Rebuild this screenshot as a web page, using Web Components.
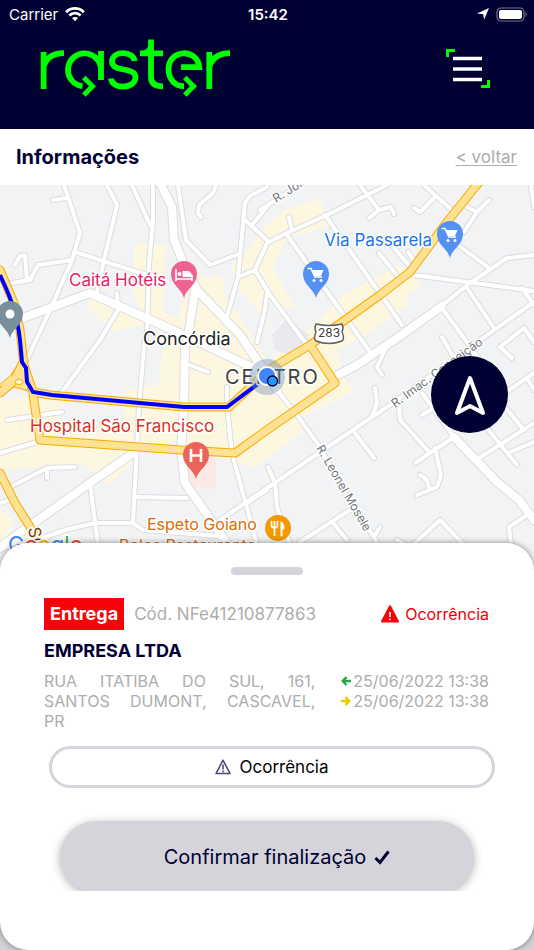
<!DOCTYPE html>
<html lang="pt-BR">
<head>
<meta charset="utf-8">
<meta name="viewport" content="width=device-width, initial-scale=1">
<title>Raster - Informações</title>
<style>
  html { height: 100%; }
  body { margin: 0; min-height: 100%; display: grid; background: #d2d1d7; font-family: Inter, "Liberation Sans", sans-serif; color: #000033; }
</style>
</head>
<body>
<raster-app></raster-app>

<template id="tpl-app">
  <style>
    :host { display: flex; flex-direction: column; min-width: 0; }
    city-map { flex: 1; min-height: 240px; margin-bottom: -34px; }
  </style>
  <status-bar></status-bar>
  <app-header></app-header>
  <page-title>Informações</page-title>
  <city-map></city-map>
  <delivery-sheet></delivery-sheet>
</template>

<template id="tpl-status">
  <style>
    :host { display: grid; grid-template-columns: 1fr auto 1fr; align-items: center; height: 28px; padding: 0 7px 0 9px; background: #000033; color: #fff; font-size: 15px; }
    .left, .right { display: flex; align-items: center; gap: 7px; }
    .right { justify-content: flex-end; }
    time { font-weight: 600; }
    svg { display: block; }
  </style>
  <span class="left">Carrier
    <svg width="20" height="16" viewBox="0 0 20 16" fill="none" stroke="#fff" stroke-width="2.8"><path d="M1.2 6.2C6 1.2 14 1.2 18.8 6.2"/><path d="M4.3 9.6c3.2-3.2 8.2-3.2 11.4 0"/><path d="M10 15.2 7 12.1c1.7-1.6 4.3-1.6 6 0z" fill="#fff" stroke="none"/></svg>
  </span>
  <time>15:42</time>
  <span class="right">
    <svg width="12" height="12" viewBox="0 0 12 12"><path d="M12 0 7.2 11.6 6.2 6.2 0 5.4z" fill="#fff"/></svg>
    <svg width="31" height="15" viewBox="0 0 31 15"><rect x="1" y="1" width="27" height="13" rx="4" fill="none" stroke="#77778f" stroke-width="1.2"/><rect x="3" y="3" width="23" height="9" rx="2" fill="#fff"/><path d="M29.600 5c1.500.8 1.500 4.200 0 5z" fill="#77778f"/></svg>
  </span>
</template>

<template id="tpl-header">
  <style>
    :host { display: flex; justify-content: space-between; align-items: flex-start; box-sizing: border-box; height: 101px; padding: 10px 44px 0 40px; background: #000033; }
    button { margin: 10px 0 0; padding: 0; border: 0; background: none; cursor: pointer; }
    svg { display: block; }
  </style>
  <svg width="192" height="60" viewBox="40 38 192 60" role="img" aria-label="raster" fill="none" stroke="#00ff00" stroke-width="5.8">
    <path d="M43.600 52v37M43.600 67C46 58 52 53.300 64 53.200"/>
    <path d="M101 51v29M101 69.800A16.500 16.500 0 1 0 82.500 86.200"/>
    <path d="M83.800 77.500 92.500 86.200 83.800 95" stroke-width="5"/>
    <path d="M134.500 61C134 51 112.500 50 112 61.500C112 73 135.500 66 135.500 77.500C135 89.500 112 89.500 111 78.500"/>
    <path d="M151 39.500V77q0 9.300 12 9.300M140 53.300h23"/>
    <path d="M141 51q7 0 7.500-8v8z" fill="#00ff00" stroke="none"/>
    <path d="M181 67.200h18.300C197.500 48 168.500 48.500 168.500 69.500C168.500 79 175 86.200 184 86.200"/>
    <path d="M184.800 77.500 193.500 86.200 184.800 95" stroke-width="5"/>
    <path d="M209.300 52v37M209.300 67C212 58 218 53.300 230 53.200"/>
  </svg>
  <button type="button" aria-label="Menu">
    <svg width="44" height="42" viewBox="0 0 44 42"><path d="M1.500 9V2.500H9M42.500 32v6.500H35" fill="none" stroke="#00ff00" stroke-width="3"/><path d="M7 10.500h29M7 21h29M7 31.500h29" stroke="#fff" stroke-width="3.500"/></svg>
  </button>
</template>

<template id="tpl-title">
  <style>
    :host { display: flex; align-items: center; justify-content: space-between; height: 56px; padding: 0 17px 0 16px; background: #fff; }
    h1 { margin: 0; font-size: 20px; line-height: 24px; font-weight: 700; }
    a { font-size: 17px; color: #adadad; text-underline-offset: 2px; }
  </style>
  <h1><slot></slot></h1>
  <a href="#voltar">&lt; voltar</a>
</template>

<template id="tpl-map">
  <style>
    :host { display: block; position: relative; overflow: hidden; background: #f1f3f4; }
    .map { position: absolute; inset: 0; width: 100%; height: 100%; display: block; }
    button { position: absolute; right: 26px; top: 171px; width: 77px; height: 77px; padding: 0; border: 0; border-radius: 50%; background: #000033; display: grid; place-items: center; cursor: pointer; }
    .case { stroke: #dadce0; }
    .fill { stroke: #fff; }
    .roads, .wide, .trunk { fill: none; stroke-linecap: round; stroke-linejoin: round; }
    text { paint-order: stroke; stroke: #fff; stroke-width: 3px; stroke-linejoin: round; font-family: Inter, sans-serif; font-size: 17px; }
    .street { font-size: 12px; fill: #70757a; }
  </style>
  <svg class="map" viewBox="0 185 534 392" preserveAspectRatio="xMidYMin slice" role="img" aria-label="Mapa de Concórdia">
    <defs>
      <g id="minor">
        <path d="M64 185 80 233 72 260 50 310 35 342 27 360M107 185 117 205 104 260 97 292M132 185 150 225M153 185V220L149 265 147 330 144 347 139 407 133 522M178 185 186 240 210 265 239 254M216 185 213 193 199 205 198 213 201 217M267 187 250 196 245 203 238 277 227 317M243 218 267 240M252 225 267 207M53 200 67 198M0 285 30 280 38 265 72 260M15 265 20 256 25 255 27 280M75 252 147 275M117 293 118 310 100 340 62 392M190 365 208 372M267 293 265 310 257 342"/>
        <path d="M260 210 300 185M267 243 287 233 327 215 387 185M238 277 255 270 267 243M255 270 270 295 307 345M360 185 379 210 369 218M379 210 391 207 394 214M287 235 370 352M289 217 292 230M325 215 402 325M379 253 399 278M392 245 410 267M408 252 416 263M424 185 454 212M414 208 420 212 435 197M467 207 477 212 489 200M477 212 464 232M454 242 489 268M440 307 470 283 507 258 534 255M414 275 474 283 534 291M467 288 494 328M442 308 480 360M442 337 454 358M522 288 534 305M524 328 500 347 512 358M524 328 534 342M531 185 534 207"/>
        <path d="M220 520 267 488 390 405 480 340 534 302M385 350 377 367 382 375M375 388 377 403 372 417M277 390 297 415 320 447 347 497 374 537 385 560M355 433 374 458M399 407 400 420 414 435 429 452M415 463 454 437M435 448 441 475 437 487 417 495M420 475 426 479 429 487M422 393 454 437M422 415 434 408M479 458 534 423M487 428 517 465M505 407 524 430M509 390 534 373M527 378 534 390M510 452 534 442M527 515 509 527 511 545M300 542 350 510M333 523 347 540M268 467 275 483 277 507 290 545M374 537 380 527M397 540 410 547"/>
        <path d="M413 545 440 520 464 545"/>
        <path d="M7 420 62 412M0 453 37 442M10 487 47 468 75 467M47 468V478M90 483 98 545M137 497 187 498M37 540 65 530 95 523 133 523 143 530 217 536M0 503 10 500M227 387 227 407 232 453 257 545M247 503 267 490M0 550 20 540"/>
      </g>
      <g id="major">
        <path d="M161 185 172 207 174 240 183 262 197 290 240 335 277 390M23 318 90 293 173 330 262 372M195 290 189 330 185 345 184 407 181 450 185 483 227 543M0 547 90 483 133 453M334 377 357 365 400 336 442 306M454 437 497 482 519 500 534 520"/>
      </g>
      <g id="highway">
        <path d="M480 181 447 222 410 272 380 295 310 345 270 369 229 407H184L50 395 33 392 24 365 20 330 14 303 0 270M310 345 335 383 267 430 235 453 181 450 40 440 33 395M0 473 15 503 32 530 42 550M0 393 14 381 24 360"/>
      </g>
      <path id="pin" d="M0 0C-2-9-13-13-13-24a13 13 0 0 1 26 0C13-13 2-9 0 0z"/>
      <g id="cart"><path d="M-8.500-6.500h3.500l4 8.500H6" fill="none" stroke="#fff" stroke-width="1.600"/><path d="M-4.500-5H7.500L5 1H-2z" fill="#fff"/><circle cx="-2" cy="5.500" r="1.500" fill="#fff"/><circle cx="5" cy="5.500" r="1.500" fill="#fff"/></g>
    </defs>
    <rect y="185" width="534" height="500" fill="#f1f3f4"/>
    <g fill="#fef7e0">
      <path d="M135 243 166 245 162 311 178 318 196 272 208 280 219 274 225 282 222 290 245 325 272 370 278 345 267 320 235 285 231 264 239 260 267 225 285 210 320 198 324 212 330 226 287 238 273 268 295 308 280 309 267 295 260 302 282 350 310 328 345 294 400 265 422 285 406 297 408 305 380 325 368 334 337 350 345 380 355 390 330 404 300 418 308 428 285 445 255 468 234 460 200 453 140 455 110 485 85 465 0 470V400L70 393 66 410 124 405 126 388 160 385 162 350 175 335 145 325 125 328 115 332 88 308 93 292 140 310 132 285z"/>
      <path d="M0 510 14 520 5 540 0 542z"/>
    </g>
    <path d="M70 400 124 400 123 425 75 420 55 425 60 410z" fill="#f1f3f4"/>
    <path d="M272 335 286 320 310 335 300 358 275 350z" fill="#e8eaed"/>
    <path d="M188 458 216 455 216 489 190 487z" fill="#fce8e6"/>
    <use href="#minor" class="roads case" stroke-width="6"/>
    <use href="#major" class="wide case" stroke-width="10"/>
    <use href="#minor" class="roads fill" stroke-width="4"/>
    <use href="#major" class="wide fill" stroke-width="8"/>
    <path d="M-2 386 10 376 20 362 32 392 14 387 0 396z" fill="#fde293" stroke="#f9ab00"/>
    <use href="#highway" class="trunk" stroke="#f9ab00" stroke-width="9"/>
    <use href="#highway" class="trunk" stroke="#fde293" stroke-width="7"/>
    <path d="M2 384 12 376 22 366 30 389 14 384 2 392z" fill="#fde293"/>
    <ellipse cx="19" cy="382" rx="4" ry="2.500" fill="#fef7e0" stroke="#f9ab00"/>
    <path d="M0 275 C12 300 17 315 20 340L22 362 26 368 27 382 33 392 52 395 184 407H227L267 377" fill="none" stroke="#0000ff" stroke-width="4"/>

    <path d="M316 324q13 3 26 0 2 4 0 8 3 7 0 9-13 5-26 0-3-2 0-9-2-4 0-8z" fill="#fff" stroke="#5f6368" stroke-width="1.500"/>
    <text x="329" y="337" text-anchor="middle" style="font-size:12px;stroke:none" fill="#3c4043">283</text>

    <text class="street" transform="translate(276 203) rotate(-32)">R. Jor</text>
    <text class="street" transform="translate(395 408) rotate(-36)">R. Imac. Conceição</text>
    <text class="street" transform="translate(316 448) rotate(60)">R. Leonel Mosele</text>
    <text transform="translate(28 528) rotate(80)" fill="#7a3e00">SC</text>

    <use href="#pin" x="10" y="338" fill="#78909c"/><circle cx="10" cy="314" r="4.500" fill="#fff"/>
    <use href="#pin" x="184" y="298" fill="#f06292"/>
    <path d="M176 269v12M192 275v6M176 279h16" fill="none" stroke="#fff" stroke-width="1.600"/><path d="M182.500 271h5.500q4 1 4 6h-9.500z" fill="#fff"/><circle cx="179.500" cy="274" r="2" fill="#fff"/>
    <use href="#pin" x="450" y="258" fill="#5491f5"/><use href="#cart" x="450" y="235"/>
    <use href="#pin" x="316" y="298" fill="#5491f5"/><use href="#cart" x="316" y="275"/>
    <use href="#pin" x="196" y="479" fill="#ea6459"/>
    <path d="M191 449v13M201 449v13M191 455.500h10" stroke="#fff" stroke-width="2.600"/>
    <circle cx="278" cy="528" r="13" fill="#f29900"/>
    <path d="M274.500 523v13M271.500 521v4q0 3 3 3t3-3v-4M274.500 521v5" fill="none" stroke="#fff" stroke-width="1.700"/><path d="M281 536v-14q3 1 3 7h-2v7z" fill="#fff" stroke="#fff"/>

    <text x="69" y="286" fill="#e91e63">Caitá Hotéis</text>
    <text x="432" y="246" text-anchor="end" fill="#1a73e8">Via Passarela</text>
    <text x="143" y="345" fill="#202124" style="font-size:18px">Concórdia</text>
    <text x="225" y="384" fill="#3c4043" style="font-size:20px;letter-spacing:2px">CENTRO</text>
    <text x="30" y="432" fill="#d93025">Hospital São Francisco</text>
    <text x="147" y="530" fill="#d56e0c" style="font-size:16px">Espeto Goiano</text>
    <text x="119" y="551" fill="#d56e0c" style="font-size:16px">Bolos Restaurante</text>
    <text x="8" y="552" style="font-size:22px"><tspan fill="#4285f4">G</tspan><tspan fill="#ea4335">o</tspan><tspan fill="#fbbc04">o</tspan><tspan fill="#4285f4">g</tspan><tspan fill="#34a853">l</tspan><tspan fill="#ea4335">e</tspan></text>

    <circle cx="267" cy="377" r="18" fill="#6f92ba" opacity=".4"/>
    <circle cx="267" cy="376" r="9" fill="#4285f4" stroke="#fff" stroke-width="2"/>
    <circle cx="272.500" cy="381" r="5" fill="#1e9bff" stroke="#000033" stroke-width="1.300"/>
  </svg>
  <button type="button" aria-label="Navegar"><svg width="34" height="44" viewBox="0 0 34 44"><path d="M17 5 30 40 17 33 4 40z" fill="none" stroke="#fff" stroke-width="4" stroke-linejoin="round"/></svg></button>
</template>

<template id="tpl-sheet">
  <style>
    :host { display: flex; flex-direction: column; position: relative; box-sizing: border-box; padding: 24px 39px 59px; border-radius: 28px; background: #fff; box-shadow: 0 0 6px rgba(0,0,0,.45); }
    .handle { width: 72px; height: 8px; border-radius: 4px; background: #d5d4da; align-self: center; }
    section { padding: 23px 6px 0 5px; }
    .top { display: flex; align-items: center; height: 32px; gap: 10px; font-size: 17px; }
    .tag { background: #f60409; color: #fff; font-weight: 700; font-size: 18px; line-height: 32px; padding: 0 6px; }
    .code { color: #adadad; }
    .alert { margin-left: auto; display: flex; align-items: center; gap: 6px; color: #f00000; font-size: 16px; }
    h2 { margin: 11px 0 10px; font-size: 18px; line-height: 20px; font-weight: 700; }
    .info { display: flex; justify-content: space-between; gap: 26px; color: #adadad; font-size: 16px; line-height: 20px; }
    address { flex: 1; font-style: normal; }
    address span { display: block; text-align: justify; text-align-last: justify; }
    address span:last-child { text-align-last: start; }
    .dates { display: flex; flex-direction: column; }
    .dates span { display: flex; align-items: center; gap: 1px; white-space: nowrap; }
    .wide { margin: 15px 0 0 10px; }
    .confirm { box-sizing: border-box; overflow: hidden; margin: 20px 0 0; padding: 13px 21px 0; height: 83px; }
    svg { display: block; }
  </style>
  <div class="handle"></div>
  <section>
    <div class="top">
      <span class="tag">Entrega</span>
      <span class="code">Cód. NFe41210877863</span>
      <span class="alert"><svg width="18" height="18" viewBox="0 0 18 18"><path d="M9 1.200 17 16.500H1z" fill="#f60409" stroke="#f60409" stroke-width="2" stroke-linejoin="round"/><path d="M9 7v5M9 13.500v1.800" stroke="#fff" stroke-width="1.500"/></svg>Ocorrência</span>
    </div>
    <h2>EMPRESA LTDA</h2>
    <div class="info">
      <address><span>RUA ITATIBA DO SUL, 161,</span> <span>SANTOS DUMONT, CASCAVEL,</span> <span>PR</span></address>
      <div class="dates">
        <span><svg width="11" height="10" viewBox="0 0 11 10" fill="none" stroke="#28a745" stroke-width="2.500"><path d="M5.500 1 1.800 5l3.700 4M2 5H10"/></svg>25/06/2022 13:38</span>
        <span><svg width="11" height="10" viewBox="0 0 11 10" fill="none" stroke="#eccc00" stroke-width="2.500"><path d="M4.500 1 8.200 5l-3.700 4M8 5H0"/></svg>25/06/2022 13:38</span>
      </div>
    </div>
  </section>
  <pill-button class="wide">
    <svg slot="icon" width="16" height="16" viewBox="0 0 16 16" fill="none" stroke="#4a4a78" stroke-width="1.600" stroke-linejoin="round"><path d="M8 1.200 15 14.500H1zM8 5.500v5M8 11.500v1.800"/></svg>
    Ocorrência
  </pill-button>
  <div class="confirm">
    <pill-button solid>Confirmar finalização
      <svg slot="end" width="16" height="15" viewBox="0 0 16 15" fill="none" stroke="#000033" stroke-width="3"><path d="M1.500 8 6 12.500 14.500 1.500"/></svg>
    </pill-button>
  </div>
</template>

<template id="tpl-pill">
  <style>
    :host { display: block; }
    button { display: flex; align-items: center; justify-content: center; gap: 8px; box-sizing: border-box; width: 100%; height: 42px; padding: 0; border: 3px solid #d5d4da; border-radius: 21px; background: #fff; color: #000; font: 17px Inter, sans-serif; cursor: pointer; }
    :host([solid]) button { height: 72px; padding-left: 20px; border: 0; border-radius: 36px; background: #d5d4da; color: #000033; font-size: 20px; box-shadow: 0 2px 10px rgba(0,0,0,.3); }
    ::slotted(svg) { display: block; }
  </style>
  <button type="button"><slot name="icon"></slot><span><slot></slot></span><slot name="end"></slot></button>
</template>

<script>
  const define = (name, templateId) => customElements.define(name, class extends HTMLElement {
    constructor() {
      super();
      this.attachShadow({ mode: 'open' }).append(document.getElementById(templateId).content.cloneNode(true));
    }
  });
  define('pill-button', 'tpl-pill');
  define('status-bar', 'tpl-status');
  define('app-header', 'tpl-header');
  define('page-title', 'tpl-title');
  define('city-map', 'tpl-map');
  define('delivery-sheet', 'tpl-sheet');
  define('raster-app', 'tpl-app');
</script>
</body>
</html>
